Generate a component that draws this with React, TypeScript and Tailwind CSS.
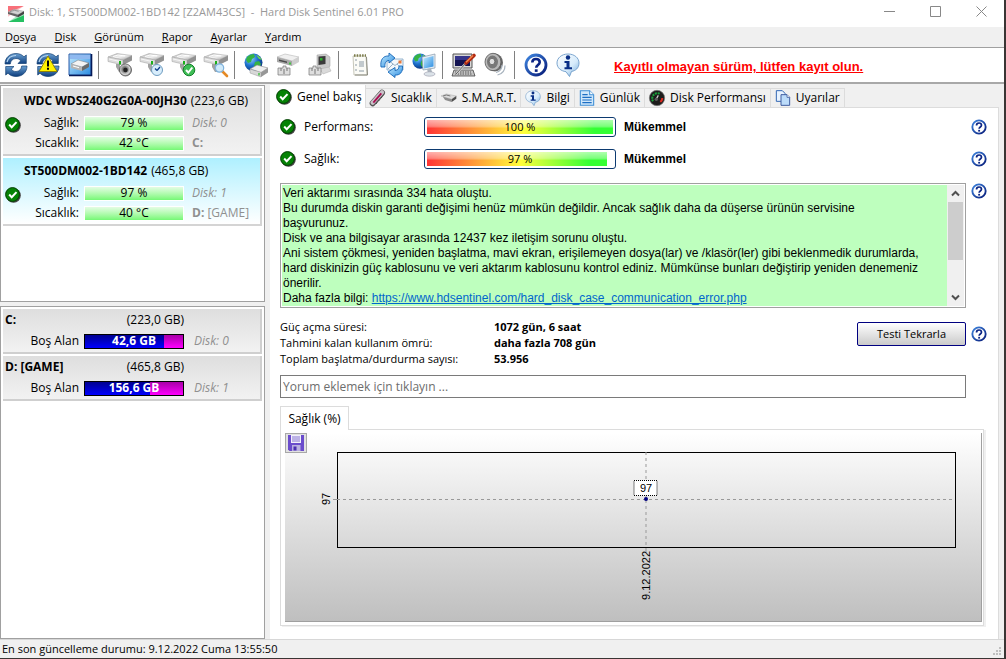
import type { ReactNode } from 'react';

const menuItems = [
  { pre: 'D', key: 'o', post: 'sya' },
  { pre: '', key: 'D', post: 'isk' },
  { pre: '', key: 'G', post: 'örünüm' },
  { pre: '', key: 'R', post: 'apor' },
  { pre: '', key: 'A', post: 'yarlar' },
  { pre: '', key: 'Y', post: 'ardım' },
];

const disks = [
  { name: 'WDC WDS240G2G0A-00JH30', size: '(223,6 GB)', health: '79 %', temp: '42 °C', no: 'Disk: 0', letter: 'C:', label: '', selected: false },
  { name: 'ST500DM002-1BD142', size: '(465,8 GB)', health: '97 %', temp: '40 °C', no: 'Disk: 1', letter: 'D:', label: ' [GAME]', selected: true },
];

const volumes = [
  { name: 'C:', size: '(223,0 GB)', free: '42,6 GB', no: 'Disk: 0', used: 81 },
  { name: 'D: [GAME]', size: '(465,8 GB)', free: '156,6 GB', no: 'Disk: 1', used: 66 },
];

/* ---------- icons ---------- */

// shared gradients, referenced by id from all icons
const Gradients = () => (
  <svg className="absolute h-0 w-0" aria-hidden="true">
    <defs>
      <linearGradient id="blue" x1="0" y1="0" x2="0" y2="1">
        <stop offset="0" stopColor="#6aa0d2" />
        <stop offset="1" stopColor="#0c3c7c" />
      </linearGradient>
      <linearGradient id="ring" x1="0" y1="0" x2="1" y2="1">
        <stop offset="0" stopColor="#3f86e0" />
        <stop offset="1" stopColor="#061a78" />
      </linearGradient>
      <linearGradient id="metal" x1="0" y1="0" x2="1" y2="1">
        <stop offset="0" stopColor="#a9a9a9" />
        <stop offset="0.5" stopColor="#f2f2f2" />
        <stop offset="1" stopColor="#9a9a9a" />
      </linearGradient>
      <linearGradient id="sky" x1="0" y1="0" x2="1" y2="1">
        <stop offset="0" stopColor="#c4ecff" />
        <stop offset="1" stopColor="#2a8be0" />
      </linearGradient>
      <radialGradient id="globe" cx="0.35" cy="0.3" r="0.75">
        <stop offset="0" stopColor="#8fd0ff" />
        <stop offset="0.5" stopColor="#1f74d0" />
        <stop offset="1" stopColor="#08307c" />
      </radialGradient>
      <radialGradient id="speaker" cx="0.45" cy="0.45" r="0.6">
        <stop offset="0" stopColor="#3a3a3a" />
        <stop offset="0.4" stopColor="#8a8a8a" />
        <stop offset="0.7" stopColor="#d8d8d8" />
        <stop offset="1" stopColor="#5a5a5a" />
      </radialGradient>
      <linearGradient id="bubble" x1="0" y1="0" x2="1" y2="1">
        <stop offset="0" stopColor="#ffffff" />
        <stop offset="0.6" stopColor="#d6ebfb" />
        <stop offset="1" stopColor="#6fa6d8" />
      </linearGradient>
    </defs>
  </svg>
);

const Icon = ({ children, className = 'h-6 w-6' }: { children: ReactNode; className?: string }) => (
  <svg viewBox="0 0 24 24" className={`${className} shrink-0 overflow-visible`} aria-hidden="true">
    {children}
  </svg>
);

const SyncArrows = () => (
  <g fill="url(#blue)" stroke="#123f73" strokeWidth="0.7" strokeLinejoin="round">
    <path d="M1 11C1 4.500 6 .5 12 .5c3.300 0 6 1.200 8 3.300L22.300 2v8.500H14l2.700-2.700C15.500 6.300 14 5.500 12 5.500 8.500 5.500 6.500 8 6.300 11z" />
    <path d="M23 13c0 6.500-5 10.500-11 10.500-3.300 0-6-1.200-8-3.300L1.700 22v-8.500H10l-2.700 2.700C8.500 17.700 10 18.500 12 18.500c3.500 0 5.500-2.500 5.700-5.500z" />
    <path d="M3 9c1-4 4.500-6.500 9-6.500" fill="none" stroke="#b5d5f0" strokeWidth="1.200" />
  </g>
);

const RefreshIcon = () => <Icon><SyncArrows /></Icon>;

const WarnRefreshIcon = () => (
  <Icon>
    <SyncArrows />
    <path d="M12 3 21 18.500H3z" fill="#fff200" stroke="#8a7a00" strokeWidth="0.900" strokeLinejoin="round" />
    <path d="M12 7.500v6" stroke="#000" strokeWidth="2" />
    <path d="M12 14.800v2" stroke="#000" strokeWidth="2" />
  </Icon>
);

const DiskWindowIcon = () => (
  <Icon>
    <path d="M1 1h22v21H1z" fill="url(#sky)" stroke="#2a5ba8" />
    <path d="M1 22.500h22.500V1" fill="none" stroke="#061a58" strokeWidth="1.600" />
    <path d="M2 2h20v4H2z" fill="#8fb9f0" />
    <path d="m3 11 7-4 11 3-7 4z" fill="#f4f4f4" stroke="#777" strokeWidth="0.500" />
    <path d="m3 11 11 3v4L3 15z" fill="#b5b5b5" />
    <path d="m14 14 7-4v4l-7 4z" fill="#6a6a6a" />
    <path d="m5 13 6 1.700" stroke="#fff" />
  </Icon>
);

const DriveBody = () => (
  <g>
    <path d="M8 11h4v3l2 5h-3l-3-5z" fill="#a2a2a2" />
    <path d="m0 4 9-3.500L24 2.500 15 7z" fill="url(#metal)" stroke="#a5a5a5" strokeWidth="0.500" />
    <path d="m0 4 15 3v5L0 8.500z" fill="#dcdcdc" stroke="#9a9a9a" strokeWidth="0.500" />
    <path d="m15 7 9-4.500v5L15 12z" fill="#929292" />
    <path d="m1 6 10 2.300" stroke="#f6f6f6" />
    <path d="M12 8v3.500" stroke="#19b019" strokeWidth="2" />
    <path d="M5 3.500 10 2l7 1" stroke="#fff" fill="none" />
  </g>
);

const DriveSpeakerIcon = () => (
  <Icon>
    <DriveBody />
    <circle cx="17.500" cy="17" r="6" fill="url(#speaker)" stroke="#444" strokeWidth="0.700" />
    <circle cx="17.500" cy="17" r="2.200" fill="#222" />
  </Icon>
);

const DriveClockIcon = () => (
  <Icon>
    <DriveBody />
    <circle cx="17" cy="17" r="5.500" fill="#d8edfb" stroke="#6e9cc0" />
    <path d="M17 17.500 20 14M17 17.500l-2-2" stroke="#123f8c" strokeWidth="1.300" />
  </Icon>
);

const DriveCheckIcon = () => (
  <Icon>
    <DriveBody />
    <circle cx="17" cy="17" r="5.800" fill="#3ebd55" stroke="#14802a" />
    <path d="m14 17 2.300 2.500 4-5" fill="none" stroke="#fff" strokeWidth="2" />
  </Icon>
);

const DriveSearchIcon = () => (
  <Icon>
    <DriveBody />
    <path d="m18 18 5 5" stroke="#e58a25" strokeWidth="2.600" strokeLinecap="round" />
    <circle cx="15.500" cy="15" r="4.200" fill="#cbe8fa" fillOpacity="0.900" stroke="#7fb2dc" strokeWidth="1.200" />
  </Icon>
);

const Globe = () => (
  <g>
    <circle cx="9.500" cy="9.500" r="9" fill="url(#globe)" />
    <path d="M3 4c2-2 5-3 7-3l1 3-3 2-1 3-3 1-2-3zM11 9l4-1 2 3-2 4-3 2-2-4z" fill="#35b344" />
    <path d="M12 2c3 .5 5 3 6 5l-3-1z" fill="#6bd354" />
  </g>
);

const GlobeDriveIcon = () => (
  <Icon>
    <Globe />
    <g transform="translate(6 11)">
      <path d="m0 5 7-4 11 3-7 4.500z" fill="#eee" stroke="#8a8a8a" strokeWidth="0.600" />
      <path d="m0 5 11 3.500V13L0 9z" fill="#d8d8d8" stroke="#999" strokeWidth="0.500" />
      <path d="m11 8.500 7-4.500v4.500L11 13z" fill="#979797" />
      <path d="M9 9v2.500" stroke="#2b2" strokeWidth="1.200" />
    </g>
  </Icon>
);

const PortDriveIcon = () => (
  <Icon>
    <path d="m1 4 8-3 14 3-7 4z" fill="#f0f0f0" stroke="#aaa" strokeWidth="0.500" />
    <path d="m1 4 15 4v5L1 9z" fill="#a8a8a8" />
    <path d="m16 8 7-4v5l-7 4z" fill="#cfcfcf" />
    <path d="m3 6.500 8 2v1.500L3 8z" fill="#4a4a4a" />
    <path d="M14 9.500v2" stroke="#2c2" strokeWidth="1.500" />
    <path d="M2 15h5v-2h3v2h4v7H2z" fill="#dedede" stroke="#777" strokeWidth="0.700" />
    <path d="M5 15v3M8 16v5M11 15v3" stroke="#777" />
  </Icon>
);

const PortMonitorIcon = () => (
  <Icon>
    <path d="m9 2 9-1 4 3v9l-4 5-9-2z" fill="#cacaca" stroke="#999" strokeWidth="0.500" />
    <path d="m10.500 3.500 7-.5v8l-7 1z" fill="#3a3a3a" />
    <path d="M12 5h2.500v2.500H12z" fill="#2fae2f" />
    <path d="m12 16 9-2 2 4-8 3z" fill="#dadada" stroke="#aaa" strokeWidth="0.500" />
    <path d="M1 15h4v-2h3v2h5v7H1z" fill="#dedede" stroke="#777" strokeWidth="0.700" />
    <path d="M4 15v3M7 16v5M10 15v3" stroke="#777" />
  </Icon>
);

const ReportIcon = () => (
  <Icon>
    <path d="M5 3h13l1 19H6z" fill="#fbfbf6" stroke="#b9b9aa" strokeWidth="0.800" />
    <path d="M6 2.500h12" stroke="#7c7c4a" strokeWidth="2.500" strokeDasharray="1.500 1.200" />
    <path d="M7 7h2M7 12h2M7 17h2M11 9h5M11 11h5M11 13h5M11 18h5" stroke="#8b99a4" strokeWidth="1.100" />
    <path d="m18.500 4 1 18H7" stroke="#8b8b80" fill="none" />
  </Icon>
);

const MailIcon = () => (
  <Icon>
    <path d="M7 6h16v11H7z" fill="#f4f8fc" stroke="#7fa3c4" strokeWidth="0.800" />
    <path d="m8 16 5-5M22 16l-5-5M8 7l7 5.500L22 7" fill="none" stroke="#9ab2c8" />
    <path d="M18.500 7.500h3v3h-3z" fill="#e87838" />
    <path d="M1 14C0 7 3 2.500 9 3V0l6 5-6 5V7.500C6 7.500 4.500 10 5 14z" fill="url(#sky)" stroke="#1667b8" strokeWidth="0.900" />
    <path d="M22.500 13c.5 6-2.500 9.500-7.500 9V24.500l-7-5.500 7-4.500v3c2.500 0 4-1.500 4-4.500z" fill="url(#sky)" stroke="#1667b8" strokeWidth="0.900" />
  </Icon>
);

const NetworkIcon = () => (
  <Icon>
    <g transform="scale(0.850)"><Globe /></g>
    <path d="m10 4 13-3v14l-12 2z" fill="#e6eef5" stroke="#89a" strokeWidth="0.700" />
    <path d="m11.500 5.500 10-2.500v10.500l-9.500 2z" fill="url(#sky)" />
    <path d="m15 16 4-.7 1 3.700-4 1z" fill="#aab4bd" />
    <ellipse cx="17.500" cy="21" rx="5.500" ry="2.200" fill="#dbe2e8" stroke="#99a" strokeWidth="0.600" />
  </Icon>
);

const ConfigIcon = () => (
  <Icon>
    <path d="M1 1h19v14H1z" fill="#d8d8d8" stroke="#555" />
    <path d="M3 3h15v10H3z" fill="#141452" />
    <path d="M3 3h15v4H3z" fill="#35358a" />
    <path d="M2 17h19l2 6H0z" fill="#c4c4c4" stroke="#444" strokeWidth="0.800" />
    <path d="M3 19h16M3 21h17" stroke="#555" strokeDasharray="1.500 1" />
    <path d="m4 21 10-11" stroke="#ddd" strokeWidth="2" />
    <path d="m4 21 10-11" stroke="#333" strokeWidth="0.800" />
    <path d="m14 10 8-7.500" stroke="#b32a12" strokeWidth="3.600" strokeLinecap="round" />
    <path d="m14 9.300 7-6.800" stroke="#f58a4c" strokeWidth="1.200" />
  </Icon>
);

const SoundIcon = () => (
  <Icon>
    <ellipse cx="11" cy="9.500" rx="8" ry="9" fill="#696969" />
    <ellipse cx="9" cy="9" rx="8" ry="8.700" fill="#b8b8b8" stroke="#555" strokeWidth="0.800" />
    <ellipse cx="8.500" cy="9" rx="5.500" ry="6.500" fill="#787878" />
    <ellipse cx="8" cy="8.500" rx="2.800" ry="3.200" fill="#dedede" stroke="#444" strokeWidth="0.600" />
    <path d="M12 19.500c4-1 6-4 6-7.500M13.500 22c5-1 7.500-5 7.500-9.500" fill="none" stroke="#a9b4bf" strokeWidth="1.200" />
  </Icon>
);

const HelpIcon = ({ className }: { className?: string }) => (
  <Icon className={className}>
    <circle cx="12" cy="12" r="10" fill="#fff" stroke="url(#ring)" strokeWidth="2.800" />
    <path d="M8.300 9.600C8.300 7.300 9.800 6 12 6s3.700 1.300 3.700 3.300c0 2.700-3.500 2.700-3.500 5.400" fill="none" stroke="#0b2484" strokeWidth="2.600" />
    <path d="M12.200 16.300v2.600" stroke="#0b2484" strokeWidth="2.800" />
  </Icon>
);

const InfoIcon = ({ className }: { className?: string }) => (
  <Icon className={className}>
    <path d="M12 1c6.300 0 11 3.800 11 9s-3.500 7.700-7.500 8.500L13.500 23.500 10 18.700C5 18 1 15 1 10s4.700-9 11-9z" fill="url(#bubble)" stroke="#6d9bc8" strokeWidth="0.900" />
    <circle cx="12" cy="4.500" r="2.200" fill="#0a2f86" />
    <path d="M8.500 8h5v6.300H16v2H8.500v-2h2V10h-2z" fill="#0a2f86" />
  </Icon>
);

const OkIcon = () => (
  <svg viewBox="0 0 16 16" className="h-4 w-4 shrink-0" aria-hidden="true">
    <circle cx="8.500" cy="8.500" r="7.300" fill="#444" />
    <circle cx="7.500" cy="7.500" r="6.900" fill="#058205" stroke="#033f03" />
    <path d="m4.200 7.500 2.500 2.800 4.800-5.200" fill="none" stroke="#fff" strokeWidth="2" />
  </svg>
);

const ThermoIcon = () => (
  <Icon className="h-4 w-4">
    <path d="m4 20 14-16" stroke="#555" strokeWidth="9" strokeLinecap="round" />
    <path d="m4 19 14-15.500" stroke="#c9c2c9" strokeWidth="6.500" strokeLinecap="round" />
    <path d="m5 19 12-14" stroke="#a80c50" strokeWidth="2.600" />
    <path d="m9 21 12-14" stroke="#333" strokeWidth="1.500" strokeDasharray="1.500 1.500" />
  </Icon>
);

const SmartIcon = () => (
  <Icon className="h-4 w-4">
    <path d="m0 9 8-3 15 3-7 5z" fill="#dcdcdc" stroke="#aaa" strokeWidth="0.800" />
    <path d="m3 10 13 4v4L6 15z" fill="#8d8d8d" />
    <path d="m16 14 7-5v4l-7 5z" fill="#4d4d4d" />
    <path d="m3 9 5-1.500 6 1.500" stroke="#777" strokeWidth="1.500" fill="none" />
  </Icon>
);

const LogIcon = () => (
  <Icon className="h-4 w-4">
    <path d="M2 1h14l6 6v16H2z" fill="#cfe7fb" stroke="#3f8fd6" strokeWidth="1.600" />
    <path d="M16 1v6h6" fill="#fff" stroke="#3f8fd6" strokeWidth="1.600" />
    <path d="M5 7h8M5 11h14M5 15h14M5 19h14" stroke="#1c6ec4" strokeWidth="1.800" />
  </Icon>
);

const GaugeIcon = () => (
  <Icon className="h-4 w-4">
    <circle cx="12" cy="12" r="11.500" fill="#1c1c1c" stroke="#777" />
    <path d="M6 17A8 8 0 0 1 17 6" fill="none" stroke="#17a33a" strokeWidth="3" strokeDasharray="3 1.200" />
    <path d="M20 12a8 8 0 0 1-3 6" fill="none" stroke="#e02a20" strokeWidth="3" />
    <path d="m10 15 4-7" stroke="#d8d8d8" strokeWidth="1.800" />
    <circle cx="11" cy="14" r="2.500" fill="#5a5a5a" />
  </Icon>
);

const CopyIcon = () => (
  <Icon className="h-4 w-4">
    <path d="M2 1h9l4 4v12H2z" fill="#e8f3ff" stroke="#3267b4" strokeWidth="1.500" />
    <path d="M9 7h9l4 4v12H9z" fill="#bcdcfa" stroke="#3f5da0" strokeWidth="1.500" />
    <path d="M18 7v4h4" fill="#fff" stroke="#3f5da0" strokeWidth="1.300" />
  </Icon>
);

const AppIcon = () => (
  <Icon className="h-4 w-4">
    <path d="M0 0h24L0 16z" fill="#f8707a" />
    <path d="M24 8v16H0z" fill="#25c062" />
    <path d="M0 10 24 0v14L0 24z" fill="#fff" fillOpacity="0.600" />
    <path d="m0 9 9-4 15 3-9 5z" fill="#d4d4d4" stroke="#888" strokeWidth="0.600" />
    <path d="m0 9 15 4v4L0 12z" fill="#666" />
    <path d="m15 13 9-5v4l-9 5z" fill="#444" />
    <path d="m3 8.500 7-2 6 1.500" stroke="#777" fill="none" />
  </Icon>
);

const SaveIcon = () => (
  <svg viewBox="0 0 16 16" className="h-4 w-4" aria-hidden="true">
    <path d="M0 0h16v16H1.500L0 14.500z" fill="#6a4ccc" />
    <path d="M3 0h10v8H3z" fill="#f2f0fb" />
    <path d="M4 2h8M4 4h8M4 6h8" stroke="#8674d0" />
    <path d="M4 10h8.500v6H4z" fill="#b9b0e0" />
    <path d="M5.500 11.500h3v4h-3z" fill="#4a2fb0" />
  </svg>
);

/* ---------- layout pieces ---------- */

const toolGroups = [
  [
    { label: 'Yenile', icon: <RefreshIcon /> },
    { label: 'Uyarıları yenile', icon: <WarnRefreshIcon /> },
    { label: 'Disk görünümü', icon: <DiskWindowIcon /> },
  ],
  [
    { label: 'Akustik', icon: <DriveSpeakerIcon /> },
    { label: 'Kısa test', icon: <DriveClockIcon /> },
    { label: 'Disk kontrolü', icon: <DriveCheckIcon /> },
    { label: 'Yüzey testi', icon: <DriveSearchIcon /> },
  ],
  [
    { label: 'Çevrimiçi', icon: <GlobeDriveIcon /> },
    { label: 'Bağlantı', icon: <PortDriveIcon /> },
    { label: 'Aygıt', icon: <PortMonitorIcon /> },
  ],
  [
    { label: 'Rapor', icon: <ReportIcon /> },
    { label: 'E-posta', icon: <MailIcon /> },
    { label: 'Ağ', icon: <NetworkIcon /> },
  ],
  [
    { label: 'Yapılandırma', icon: <ConfigIcon /> },
    { label: 'Ses', icon: <SoundIcon /> },
  ],
  [
    { label: 'Yardım', icon: <HelpIcon /> },
    { label: 'Bilgi', icon: <InfoIcon /> },
  ],
];

const tabs = [
  { label: 'Sıcaklık', icon: <ThermoIcon /> },
  { label: 'S.M.A.R.T.', icon: <SmartIcon /> },
  { label: 'Bilgi', icon: <InfoIcon className="h-4 w-4" /> },
  { label: 'Günlük', icon: <LogIcon /> },
  { label: 'Disk Performansı', icon: <GaugeIcon /> },
  { label: 'Uyarılar', icon: <CopyIcon /> },
];

const HelpButton = () => (
  <button type="button" aria-label="Yardım" className="flex h-4 w-4 shrink-0">
    <HelpIcon className="h-4 w-4" />
  </button>
);

const TitleBar = () => (
  <header className="flex h-[27px] items-center bg-white pl-2 text-[#999999]">
    <AppIcon />
    <h1 className="ml-[5px] flex-1 pb-1 text-[11px] whitespace-pre">Disk: 1, ST500DM002-1BD142 [Z2AM43CS]  -  Hard Disk Sentinel 6.01 PRO</h1>
    <div className="flex pb-1">
      <button type="button" aria-label="Simge durumuna küçült" className="flex w-[46px] justify-center">
        <svg viewBox="0 0 11 11" className="h-[11px] w-[11px]"><path d="M0 5.500h11" stroke="#888" /></svg>
      </button>
      <button type="button" aria-label="Ekranı kapla" className="flex w-[46px] justify-center">
        <svg viewBox="0 0 11 11" className="h-[11px] w-[11px]"><path d="M.5.5h10v10H.5z" fill="none" stroke="#888" /></svg>
      </button>
      <button type="button" aria-label="Kapat" className="flex w-[46px] justify-center">
        <svg viewBox="0 0 11 11" className="h-[11px] w-[11px]"><path d="m.5.5 10 10m0-10-10 10" stroke="#888" /></svg>
      </button>
    </div>
  </header>
);

const MenuBar = () => (
  <nav className="flex h-[21px] items-center gap-[18px] border-b border-[#a0a0a0] pl-[5px] text-[11px]">
    {menuItems.map((m) => (
      <button key={m.key + m.post} type="button">
        {m.pre}
        <span className="underline">{m.key}</span>
        {m.post}
      </button>
    ))}
  </nav>
);

const Toolbar = () => (
  <div className="flex h-[36px] items-center border-b-2 border-[#a8a8a8] bg-white">
    {toolGroups.map((group, i) => (
      <div key={i} className="flex items-center">
        {i > 0 && <span className="ml-[2px] mr-[5px] h-7 w-px bg-[#808080]" />}
        {group.map((tool) => (
          <button key={tool.label} type="button" aria-label={tool.label} className="flex h-8 w-8 items-center justify-center">
            {tool.icon}
          </button>
        ))}
      </div>
    ))}
    <a href="#" className="ml-[30px] pt-1 font-['Liberation_Sans',sans-serif] text-[13px] font-bold text-[#ff0000] underline">
      Kayıtlı olmayan sürüm, lütfen kayıt olun.
    </a>
  </div>
);

const MiniBar = ({ children }: { children: ReactNode }) => (
  <span className="flex h-[15px] w-[100px] items-center justify-center border border-white bg-linear-to-b from-[#e4fce4] to-[#74f874]">
    {children}
  </span>
);

const DiskCard = ({ disk }: { disk: (typeof disks)[number] }) => (
  <div
    className={
      disk.selected
        ? 'h-[68px] border-r-2 border-b-2 border-[#d4d4d4] bg-linear-to-b from-[#aef0ff] to-white'
        : 'h-[68px] border-r-2 border-b-2 border-[#cfcfcf] bg-linear-to-b from-[#dedede] to-[#f2f2f2]'
    }
  >
    <div className="flex h-[25px] items-center gap-1 pl-[21px] whitespace-nowrap">
      <b>{disk.name}</b>
      <span>{disk.size}</span>
    </div>
    <div className="flex items-start">
      <span className="w-[18px] pt-1 pl-[2px]"><OkIcon /></span>
      <div className="grid grid-cols-[58px_100px_1fr] gap-x-[5px]">
        <span className="flex h-5 items-center justify-end">Sağlık:</span>
        <span className="flex items-center"><MiniBar>{disk.health}</MiniBar></span>
        <i className="pl-[3px] leading-5 text-[#909090]">{disk.no}</i>
        <span className="flex h-5 items-center justify-end">Sıcaklık:</span>
        <span className="flex items-center"><MiniBar>{disk.temp}</MiniBar></span>
        <span className="pl-[3px] leading-5 whitespace-pre text-[#909090]"><b>{disk.letter}</b>{disk.label}</span>
      </div>
    </div>
  </div>
);

const VolumeCard = ({ volume }: { volume: (typeof volumes)[number] }) => (
  <div className="h-[45px] border-r-2 border-b-2 border-[#cfcfcf] bg-linear-to-b from-[#dedede] to-[#f2f2f2] pl-[2px]">
    <div className="flex h-[22px] w-[179px] items-center justify-between">
      <b>{volume.name}</b>
      <span>{volume.size}</span>
    </div>
    <div className="flex h-5 items-center">
      <span className="w-[74px] text-right">Boş Alan</span>
      <div className="relative ml-[5px] flex h-[15px] w-[100px] border border-black bg-linear-to-b from-[#a800a8] to-[#ff00ff]">
        <span className="bg-linear-to-b from-[#000090] to-[#0000ff]" style={{ width: `${volume.used}%` }} />
        <b className="absolute inset-0 flex items-center justify-center text-white">{volume.free}</b>
      </div>
      <i className="ml-[10px] text-[#909090]">{volume.no}</i>
    </div>
  </div>
);

const Sidebar = () => (
  <aside className="flex w-[265px] shrink-0 flex-col gap-1">
    <section className="flex h-[217px] flex-col gap-[2px] border border-[#a0a0a0] bg-white p-[2px]">
      {disks.map((d) => <DiskCard key={d.name} disk={d} />)}
    </section>
    <section className="flex flex-1 flex-col gap-[2px] border border-[#a0a0a0] bg-white p-[2px]">
      {volumes.map((v) => <VolumeCard key={v.name} volume={v} />)}
    </section>
  </aside>
);

const StatusRow = ({ label, value, text }: { label: string; value: number; text: string }) => (
  <div className="flex h-8 items-center">
    <OkIcon />
    <span className="ml-2 w-[120px]">{label}</span>
    <div className="relative h-5 w-48 rounded-[3px] border border-[#0c3a70] bg-white p-[2px]">
      <div
        className="h-full bg-[linear-gradient(to_bottom,rgba(255,255,255,.6),rgba(255,255,255,.35)_45%,rgba(255,255,255,0)_60%),linear-gradient(to_right,#ff3434,#ffff3c_52%,#34ff34_90%)]"
        style={{ width: `${value}%` }}
      />
      <span className="absolute inset-0 flex items-center justify-center text-[11px]">{value} %</span>
    </div>
    <b className="ml-2 flex-1 font-['Liberation_Sans',sans-serif] text-[12px]">{text}</b>
    <HelpButton />
  </div>
);

const Message = () => (
  <div className="flex items-start gap-[5px]">
    <div className="flex h-[125px] flex-1 border border-[#a0a0a0] bg-white p-px">
      <div className="flex-1 overflow-hidden bg-[#beffbe] px-px pt-px font-['Liberation_Sans',sans-serif] text-[12px] leading-[15px]">
        <p>Veri aktarımı sırasında 334 hata oluştu.</p>
        <p>
          Bu durumda diskin garanti değişimi henüz mümkün değildir. Ancak sağlık daha da düşerse ürünün servisine
          <br />
          başvurunuz.
        </p>
        <p>Disk ve ana bilgisayar arasında 12437 kez iletişim sorunu oluştu.</p>
        <p>
          Ani sistem çökmesi, yeniden başlatma, mavi ekran, erişilemeyen dosya(lar) ve /klasör(ler) gibi beklenmedik durumlarda,
          <br />
          hard diskinizin güç kablosunu ve veri aktarım kablosunu kontrol ediniz. Mümkünse bunları değiştirip yeniden denemeniz
          <br />
          önerilir.
        </p>
        <p>
          Daha fazla bilgi:{' '}
          <a href="https://www.hdsentinel.com/hard_disk_case_communication_error.php" className="text-[#0066cc] underline">
            https://www.hdsentinel.com/hard_disk_case_communication_error.php
          </a>
        </p>
      </div>
      <div className="flex w-[17px] flex-col items-center bg-[#f0f0f0]">
        <svg viewBox="0 0 17 17" className="h-[17px] w-[17px]"><path d="m5 10.500 3.500-3.500 3.500 3.500" fill="none" stroke="#505050" strokeWidth="2" /></svg>
        <span className="h-[58px] w-[15px] bg-[#cdcdcd]" />
        <svg viewBox="0 0 17 17" className="mt-auto h-[17px] w-[17px]"><path d="m5 6.500 3.500 3.500 3.500-3.500" fill="none" stroke="#505050" strokeWidth="2" /></svg>
      </div>
    </div>
    <HelpButton />
  </div>
);

const Stats = () => (
  <div className="mt-[11px] flex items-start text-[11px] leading-4">
    <dl className="grid flex-1 grid-cols-[214px_1fr]">
      <dt>Güç açma süresi:</dt>
      <dd className="font-bold">1072 gün, 6 saat</dd>
      <dt>Tahmini kalan kullanım ömrü:</dt>
      <dd className="font-bold">daha fazla 708 gün</dd>
      <dt>Toplam başlatma/durdurma sayısı:</dt>
      <dd className="font-bold">53.956</dd>
    </dl>
    <div className="mt-[3px] flex items-center gap-[5px]">
      <button type="button" className="h-6 w-[109px] rounded-[2px] border border-[#000080] bg-linear-to-b from-white to-[#cacaca]">
        Testi Tekrarla
      </button>
      <HelpButton />
    </div>
  </div>
);

const Chart = () => (
  <section className="mt-2 mr-[3px]">
    <div className="relative z-10 -mb-px flex h-6 w-[69px] items-center justify-center border border-b-0 border-[#dcdcdc] bg-white">
      Sağlık (%)
    </div>
    <div className="h-[197px] border border-[#dcdcdc] bg-white py-[3px] pl-1 pr-px shadow-[2px_1px_0_#f0f0f0]">
      <div className="relative h-full border-r border-b border-[#a0a0a0] bg-linear-to-b from-white to-[#bfbfbf] pt-[19px] pr-[26px] pl-[52px]">
        <button
          type="button"
          aria-label="Grafiği kaydet"
          className="absolute top-0 left-0 flex h-5 w-[22px] items-center justify-center border border-[#a8a8a8] bg-[#e1e1e1]"
        >
          <SaveIcon />
        </button>
        <svg className="h-24 w-full overflow-visible" fontFamily="Liberation Sans, sans-serif" fontSize="11">
          <rect x="0.500" y="0.500" width="100%" height="95" fill="none" stroke="#000" />
          <path d="M-4 47.500H0" stroke="#999" />
          <line x1="0" y1="47.500" x2="100%" y2="47.500" stroke="#999" strokeDasharray="3 3" />
          <text transform="translate(-7 53) rotate(-90)">97</text>
          <svg x="50%" className="overflow-visible">
            <path d="M0 0v95" stroke="#999" strokeDasharray="3 3" />
            <path d="M0 96v4" stroke="#999" />
            <rect x="-12" y="28.500" width="23" height="15" fill="#fff" stroke="#000" strokeDasharray="1 1" />
            <text x="0" y="40" textAnchor="middle">97</text>
            <circle cx="0" cy="47" r="2" fill="#000080" />
            <text textAnchor="end" transform="translate(4 99) rotate(-90)">9.12.2022</text>
          </svg>
        </svg>
      </div>
    </div>
  </section>
);

const Main = () => (
  <main className="mx-[5px] flex min-w-0 flex-1 flex-col">
    <div className="flex h-[22px] items-end" role="tablist">
      <button type="button" role="tab" aria-selected="true" className="z-10 -mb-px flex h-[23px] w-[96px] items-center gap-[5px] border-r border-[#dcdcdc] bg-white pl-[6px] whitespace-nowrap">
        <OkIcon />
        Genel bakış
      </button>
      {tabs.map((tab) => (
        <button key={tab.label} type="button" role="tab" aria-selected="false" className="flex h-[19px] items-center gap-[5px] border-t border-r border-[#dcdcdc] px-1 whitespace-nowrap">
          {tab.icon}
          {tab.label}
        </button>
      ))}
    </div>
    <div className="flex-1 border-t border-r border-[#dcdcdc] bg-white pt-[3px] pr-[11px] pl-[10px]">
      <StatusRow label="Performans:" value={100} text="Mükemmel" />
      <StatusRow label="Sağlık:" value={97} text="Mükemmel" />
      <div className="mt-2">
        <Message />
      </div>
      <Stats />
      <input
        type="text"
        aria-label="Yorum"
        placeholder="Yorum eklemek için tıklayın ..."
        className="mt-2 block h-[23px] w-[calc(100%-21px)] border border-[#7a7a7a] bg-white px-[2px] placeholder:text-[#6d6d6d]"
      />
      <Chart />
    </div>
  </main>
);

export default function App() {
  return (
    <div className="flex min-h-screen flex-col border-r-2 border-b border-[#3a3534] bg-[#f0f0f0] font-['Open_Sans',sans-serif] text-[12px] leading-4 text-black">
      <Gradients />
      <TitleBar />
      <MenuBar />
      <Toolbar />
      <div className="flex flex-1 pt-px">
        <Sidebar />
        <Main />
      </div>
      <footer className="flex h-[19px] items-center justify-between border-t border-[#d7d7d7] pl-[2px] text-[11px]">
        <span>En son güncelleme durumu: 9.12.2022 Cuma 13:55:50</span>
        <svg viewBox="0 0 10 10" className="mt-auto mr-[2px] mb-px h-[10px] w-[10px]" aria-hidden="true">
          <path d="M7 1h2M4 4h2M7 4h2M1 7h2M4 7h2M7 7h2" stroke="#bfbfbf" strokeWidth="2" />
        </svg>
      </footer>
    </div>
  );
}
